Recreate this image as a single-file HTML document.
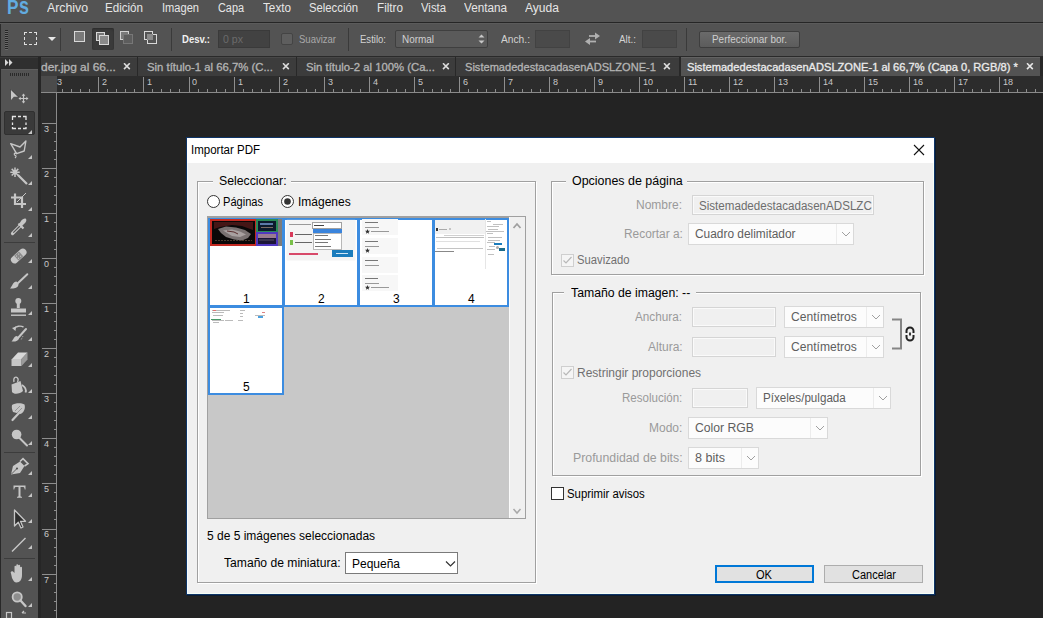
<!DOCTYPE html>
<html><head><meta charset="utf-8"><style>
html,body{margin:0;padding:0;}
body{width:1043px;height:618px;overflow:hidden;position:relative;background:#232323;font-family:"Liberation Sans",sans-serif;}
.r{position:absolute;}
.t{position:absolute;white-space:nowrap;}
</style></head><body>
<div class="r" style="left:0px;top:0px;width:1043px;height:22px;background:#535353"></div>
<div class="r" style="left:0px;top:22px;width:1043px;height:1px;background:#262626"></div>
<div class="r" style="left:0px;top:23px;width:1043px;height:1px;background:#5b5b5b"></div>
<div class="t" style="left:6.5px;top:-4.6px;font-size:21px;line-height:23px;color:#62ace0;font-weight:bold;transform:scaleX(0.8214);transform-origin:0 0;">P</div>
<div class="t" style="left:18.5px;top:-6.800000000000001px;font-size:23px;line-height:26px;color:#62ace0;font-weight:bold;transform:scaleX(0.7814);transform-origin:0 0;">s</div>
<div class="t" style="left:47px;top:1px;font-size:12px;line-height:14px;color:#e6e6e6;transform:scaleX(1.0246);transform-origin:0 0;">Archivo</div>
<div class="t" style="left:105px;top:1px;font-size:12px;line-height:14px;color:#e6e6e6;transform:scaleX(0.9655);transform-origin:0 0;">Edición</div>
<div class="t" style="left:162px;top:1px;font-size:12px;line-height:14px;color:#e6e6e6;transform:scaleX(0.9246);transform-origin:0 0;">Imagen</div>
<div class="t" style="left:218px;top:1px;font-size:12px;line-height:14px;color:#e6e6e6;transform:scaleX(0.9063);transform-origin:0 0;">Capa</div>
<div class="t" style="left:263px;top:1px;font-size:12px;line-height:14px;color:#e6e6e6;transform:scaleX(0.9766);transform-origin:0 0;">Texto</div>
<div class="t" style="left:309px;top:1px;font-size:12px;line-height:14px;color:#e6e6e6;transform:scaleX(0.9417);transform-origin:0 0;">Selección</div>
<div class="t" style="left:377px;top:1px;font-size:12px;line-height:14px;color:#e6e6e6;transform:scaleX(0.9748);transform-origin:0 0;">Filtro</div>
<div class="t" style="left:421px;top:1px;font-size:12px;line-height:14px;color:#e6e6e6;transform:scaleX(0.9451);transform-origin:0 0;">Vista</div>
<div class="t" style="left:464px;top:1px;font-size:12px;line-height:14px;color:#e6e6e6;transform:scaleX(0.9766);transform-origin:0 0;">Ventana</div>
<div class="t" style="left:525px;top:1px;font-size:12px;line-height:14px;color:#e6e6e6;transform:scaleX(1.0060);transform-origin:0 0;">Ayuda</div>
<div class="r" style="left:0px;top:24px;width:1043px;height:32px;background:#535353"></div>
<div class="r" style="left:0px;top:56px;width:1043px;height:1px;background:#2a2a2a"></div>
<div class="r" style="left:0px;top:24px;width:1px;height:32px;background:#2c2c2c"></div>
<div class="r" style="left:5px;top:30px;width:3px;height:1px;background:#262626"></div>
<div class="r" style="left:5px;top:31px;width:3px;height:1px;background:#6a6a6a"></div>
<div class="r" style="left:5px;top:32px;width:3px;height:1px;background:#262626"></div>
<div class="r" style="left:5px;top:33px;width:3px;height:1px;background:#6a6a6a"></div>
<div class="r" style="left:5px;top:34px;width:3px;height:1px;background:#262626"></div>
<div class="r" style="left:5px;top:35px;width:3px;height:1px;background:#6a6a6a"></div>
<div class="r" style="left:5px;top:36px;width:3px;height:1px;background:#262626"></div>
<div class="r" style="left:5px;top:37px;width:3px;height:1px;background:#6a6a6a"></div>
<div class="r" style="left:5px;top:38px;width:3px;height:1px;background:#262626"></div>
<div class="r" style="left:5px;top:39px;width:3px;height:1px;background:#6a6a6a"></div>
<div class="r" style="left:5px;top:40px;width:3px;height:1px;background:#262626"></div>
<div class="r" style="left:5px;top:41px;width:3px;height:1px;background:#6a6a6a"></div>
<div class="r" style="left:5px;top:42px;width:3px;height:1px;background:#262626"></div>
<div class="r" style="left:5px;top:43px;width:3px;height:1px;background:#6a6a6a"></div>
<div class="r" style="left:5px;top:44px;width:3px;height:1px;background:#262626"></div>
<div class="r" style="left:5px;top:45px;width:3px;height:1px;background:#6a6a6a"></div>
<div class="r" style="left:5px;top:46px;width:3px;height:1px;background:#262626"></div>
<div class="r" style="left:5px;top:47px;width:3px;height:1px;background:#6a6a6a"></div>
<div class="r" style="left:5px;top:48px;width:3px;height:1px;background:#262626"></div>
<div class="r" style="left:5px;top:49px;width:3px;height:1px;background:#6a6a6a"></div>
<div class="r" style="left:24px;top:32px;width:13px;height:13px;border:1px dashed #e0e0e0;box-sizing:border-box"></div>
<svg class="r" style="left:48px;top:37px" width="8" height="5"><path d="M0 0H8L4 4Z" fill="#e8e8e8"/></svg>
<div class="r" style="left:60px;top:28px;width:1px;height:23px;background:#3a3a3a"></div>
<div class="r" style="left:74px;top:31px;width:11px;height:11px;border:1px solid #d8d8d8;background:#7a7a7a;box-sizing:border-box"></div>
<div class="r" style="left:92px;top:28px;width:22px;height:22px;background:#3a3a3a;border-radius:2px;box-shadow:inset 0 1px 2px #2a2a2a"></div>
<div class="r" style="left:96px;top:32px;width:9px;height:9px;border:1px solid #d8d8d8;background:#777;box-sizing:border-box"></div>
<div class="r" style="left:99px;top:35px;width:10px;height:10px;border:1px solid #d8d8d8;background:#8a8a8a;box-sizing:border-box"></div>
<div class="r" style="left:120px;top:31px;width:9px;height:9px;border:1px solid #d0d0d0;background:#7a7a7a;box-sizing:border-box"></div>
<div class="r" style="left:123px;top:34px;width:10px;height:10px;border:1px solid #777;background:#5d5d5d;box-sizing:border-box"></div>
<div class="r" style="left:144px;top:31px;width:9px;height:9px;border:1px solid #d8d8d8;box-sizing:border-box"></div>
<div class="r" style="left:147px;top:34px;width:10px;height:10px;border:1px solid #d8d8d8;box-sizing:border-box"></div>
<div class="r" style="left:147px;top:34px;width:6px;height:6px;background:#8a8a8a"></div>
<div class="r" style="left:171px;top:28px;width:1px;height:23px;background:#3a3a3a"></div>
<div class="t" style="left:182px;top:33px;font-size:11px;line-height:12px;color:#f0f0f0;font-weight:bold;transform:scaleX(0.8691);transform-origin:0 0;">Desv.:</div>
<div class="r" style="left:218px;top:30px;width:52px;height:18px;background:#424242;border:1px solid #3a3a3a;box-sizing:border-box"></div>
<div class="t" style="left:223px;top:33px;font-size:11px;line-height:12px;color:#6b6b6b;transform:scaleX(0.9610);transform-origin:0 0;">0 px</div>
<div class="r" style="left:281px;top:33px;width:12px;height:12px;background:#5e5e5e;border:1px solid #444;border-radius:2px;box-sizing:border-box"></div>
<div class="t" style="left:299px;top:33px;font-size:11px;line-height:12px;color:#a9a9a9;transform:scaleX(0.8642);transform-origin:0 0;">Suavizar</div>
<div class="r" style="left:348px;top:28px;width:1px;height:23px;background:#3a3a3a"></div>
<div class="t" style="left:360px;top:33px;font-size:11px;line-height:12px;color:#d2d2d2;transform:scaleX(0.8676);transform-origin:0 0;">Estilo:</div>
<div class="r" style="left:395px;top:30px;width:93px;height:18px;background:#5a5a5a;border:1px solid #3f3f3f;border-radius:2px;box-sizing:border-box"></div>
<div class="t" style="left:402px;top:33px;font-size:11px;line-height:12px;color:#d0d0d0;transform:scaleX(0.9030);transform-origin:0 0;">Normal</div>
<svg class="r" style="left:478px;top:33px" width="7" height="12"><path d="M0.5 4.5L3.5 1.5L6.5 4.5Z M0.5 7.5L3.5 10.5L6.5 7.5Z" fill="#c8c8c8"/></svg>
<div class="t" style="left:501px;top:33px;font-size:11px;line-height:12px;color:#d2d2d2;transform:scaleX(0.9289);transform-origin:0 0;">Anch.:</div>
<div class="r" style="left:535px;top:30px;width:35px;height:18px;background:#4a4a4a;border:1px solid #424242;box-sizing:border-box"></div>
<svg class="r" style="left:584px;top:31px" width="17" height="15"><path d="M5 5H14" stroke="#b0b0b0" stroke-width="1.8"/><path d="M11 1.5L16 5L11 8.5Z" fill="#b0b0b0"/><path d="M12 10.5H3" stroke="#b0b0b0" stroke-width="1.8"/><path d="M6 7L1 10.5L6 14Z" fill="#b0b0b0"/></svg>
<div class="t" style="left:619px;top:33px;font-size:11px;line-height:12px;color:#d2d2d2;transform:scaleX(0.8962);transform-origin:0 0;">Alt.:</div>
<div class="r" style="left:642px;top:30px;width:35px;height:18px;background:#4a4a4a;border:1px solid #424242;box-sizing:border-box"></div>
<div class="r" style="left:686px;top:28px;width:1px;height:23px;background:#3a3a3a"></div>
<div class="r" style="left:699px;top:31px;width:101px;height:17px;background:linear-gradient(#6a6a6a,#5c5c5c);border:1px solid #3e3e3e;border-radius:2px;box-sizing:border-box"></div>
<div class="t" style="left:712px;top:33px;font-size:11px;line-height:12px;color:#cfcfcf;transform:scaleX(0.9014);transform-origin:0 0;">Perfeccionar bor.</div>
<div class="r" style="left:0px;top:57px;width:1043px;height:20px;background:#282828"></div>
<div class="r" style="left:0px;top:57px;width:38px;height:12px;background:#2f2f2f"></div>
<div class="r" style="left:0px;top:57px;width:38px;height:1px;background:#3a3a3a"></div>
<svg class="r" style="left:5px;top:59px" width="8" height="7"><path d="M0 0L3.5 3.5L0 7Z M4 0L7.5 3.5L4 7Z" fill="#d8d8d8"/></svg>
<div class="r" style="left:41px;top:57px;width:96px;height:19px;background:#3c3c3c;border-top:1px solid #474747;box-sizing:border-box"></div>
<div class="t" style="left:41px;top:61px;font-size:11px;line-height:12px;color:#b4b4b4;transform:scaleX(1.0843);transform-origin:0 0;-webkit-text-stroke:0.3px #b4b4b4;">der.jpg al 66...</div>
<div class="r" style="left:138px;top:57px;width:158px;height:19px;background:#3c3c3c;border-top:1px solid #474747;box-sizing:border-box"></div>
<div class="t" style="left:147px;top:61px;font-size:11px;line-height:12px;color:#b4b4b4;transform:scaleX(1.0296);transform-origin:0 0;-webkit-text-stroke:0.3px #b4b4b4;">Sin título-1 al 66,7% (C...</div>
<div class="r" style="left:297px;top:57px;width:158px;height:19px;background:#3c3c3c;border-top:1px solid #474747;box-sizing:border-box"></div>
<div class="t" style="left:306px;top:61px;font-size:11px;line-height:12px;color:#b4b4b4;transform:scaleX(1.0284);transform-origin:0 0;-webkit-text-stroke:0.3px #b4b4b4;">Sin título-2 al 100% (Ca...</div>
<div class="r" style="left:456px;top:57px;width:223px;height:19px;background:#3c3c3c;border-top:1px solid #474747;box-sizing:border-box"></div>
<div class="t" style="left:465px;top:61px;font-size:11px;line-height:12px;color:#b4b4b4;transform:scaleX(1.0071);transform-origin:0 0;-webkit-text-stroke:0.3px #b4b4b4;">SistemadedestacadasenADSLZONE-1</div>
<div class="r" style="left:681px;top:57px;width:359px;height:19px;background:#535353;border-top:1px solid #626262;box-sizing:border-box"></div>
<div class="t" style="left:687px;top:61px;font-size:11px;line-height:12px;color:#ebebeb;transform:scaleX(1.0093);transform-origin:0 0;-webkit-text-stroke:0.3px #ebebeb;">SistemadedestacadasenADSLZONE-1 al 66,7% (Capa 0, RGB/8) *</div>
<svg class="r" style="left:123px;top:63px" width="8" height="7"><path d="M1 0.3L6.8 6.1M6.8 0.3L1 6.1" stroke="#dcdcdc" stroke-width="1.6"/></svg>
<svg class="r" style="left:282px;top:63px" width="8" height="7"><path d="M1 0.3L6.8 6.1M6.8 0.3L1 6.1" stroke="#dcdcdc" stroke-width="1.6"/></svg>
<svg class="r" style="left:442px;top:63px" width="8" height="7"><path d="M1 0.3L6.8 6.1M6.8 0.3L1 6.1" stroke="#dcdcdc" stroke-width="1.6"/></svg>
<svg class="r" style="left:663px;top:63px" width="8" height="7"><path d="M1 0.3L6.8 6.1M6.8 0.3L1 6.1" stroke="#dcdcdc" stroke-width="1.6"/></svg>
<svg class="r" style="left:1026px;top:63px" width="8" height="7"><path d="M1 0.3L6.8 6.1M6.8 0.3L1 6.1" stroke="#e8e8e8" stroke-width="1.6"/></svg>
<div class="r" style="left:41px;top:76px;width:1002px;height:17px;background:#2c2c2c"></div>
<div class="r" style="left:41px;top:92px;width:1002px;height:1px;background:#8a8a8a"></div>
<div class="r" style="left:41px;top:76px;width:16px;height:16px;background:#4b4b4b"></div>
<div class="r" style="left:41px;top:93px;width:16px;height:525px;background:#2c2c2c"></div>
<div class="r" style="left:56px;top:93px;width:1px;height:525px;background:#8a8a8a"></div>
<svg class="r" style="left:0;top:0" width="1043" height="618"><rect x="62" y="89" width="1" height="3" fill="#8e8e8e"/><rect x="71" y="89" width="1" height="3" fill="#8e8e8e"/><rect x="80" y="89" width="1" height="3" fill="#8e8e8e"/><rect x="89" y="89" width="1" height="3" fill="#8e8e8e"/><rect x="98" y="77" width="1" height="15" fill="#8e8e8e"/><rect x="107" y="89" width="1" height="3" fill="#8e8e8e"/><rect x="116" y="89" width="1" height="3" fill="#8e8e8e"/><rect x="125" y="89" width="1" height="3" fill="#8e8e8e"/><rect x="134" y="89" width="1" height="3" fill="#8e8e8e"/><rect x="143" y="77" width="1" height="15" fill="#8e8e8e"/><rect x="152" y="89" width="1" height="3" fill="#8e8e8e"/><rect x="161" y="89" width="1" height="3" fill="#8e8e8e"/><rect x="170" y="89" width="1" height="3" fill="#8e8e8e"/><rect x="179" y="89" width="1" height="3" fill="#8e8e8e"/><rect x="189" y="77" width="1" height="15" fill="#8e8e8e"/><rect x="198" y="89" width="1" height="3" fill="#8e8e8e"/><rect x="207" y="89" width="1" height="3" fill="#8e8e8e"/><rect x="216" y="89" width="1" height="3" fill="#8e8e8e"/><rect x="225" y="89" width="1" height="3" fill="#8e8e8e"/><rect x="234" y="77" width="1" height="15" fill="#8e8e8e"/><rect x="243" y="89" width="1" height="3" fill="#8e8e8e"/><rect x="252" y="89" width="1" height="3" fill="#8e8e8e"/><rect x="261" y="89" width="1" height="3" fill="#8e8e8e"/><rect x="270" y="89" width="1" height="3" fill="#8e8e8e"/><rect x="279" y="77" width="1" height="15" fill="#8e8e8e"/><rect x="288" y="89" width="1" height="3" fill="#8e8e8e"/><rect x="297" y="89" width="1" height="3" fill="#8e8e8e"/><rect x="306" y="89" width="1" height="3" fill="#8e8e8e"/><rect x="315" y="89" width="1" height="3" fill="#8e8e8e"/><rect x="324" y="77" width="1" height="15" fill="#8e8e8e"/><rect x="333" y="89" width="1" height="3" fill="#8e8e8e"/><rect x="342" y="89" width="1" height="3" fill="#8e8e8e"/><rect x="351" y="89" width="1" height="3" fill="#8e8e8e"/><rect x="360" y="89" width="1" height="3" fill="#8e8e8e"/><rect x="369" y="77" width="1" height="15" fill="#8e8e8e"/><rect x="378" y="89" width="1" height="3" fill="#8e8e8e"/><rect x="387" y="89" width="1" height="3" fill="#8e8e8e"/><rect x="396" y="89" width="1" height="3" fill="#8e8e8e"/><rect x="405" y="89" width="1" height="3" fill="#8e8e8e"/><rect x="414" y="77" width="1" height="15" fill="#8e8e8e"/><rect x="423" y="89" width="1" height="3" fill="#8e8e8e"/><rect x="432" y="89" width="1" height="3" fill="#8e8e8e"/><rect x="441" y="89" width="1" height="3" fill="#8e8e8e"/><rect x="450" y="89" width="1" height="3" fill="#8e8e8e"/><rect x="459" y="77" width="1" height="15" fill="#8e8e8e"/><rect x="468" y="89" width="1" height="3" fill="#8e8e8e"/><rect x="477" y="89" width="1" height="3" fill="#8e8e8e"/><rect x="486" y="89" width="1" height="3" fill="#8e8e8e"/><rect x="495" y="89" width="1" height="3" fill="#8e8e8e"/><rect x="504" y="77" width="1" height="15" fill="#8e8e8e"/><rect x="513" y="89" width="1" height="3" fill="#8e8e8e"/><rect x="522" y="89" width="1" height="3" fill="#8e8e8e"/><rect x="531" y="89" width="1" height="3" fill="#8e8e8e"/><rect x="540" y="89" width="1" height="3" fill="#8e8e8e"/><rect x="549" y="77" width="1" height="15" fill="#8e8e8e"/><rect x="558" y="89" width="1" height="3" fill="#8e8e8e"/><rect x="567" y="89" width="1" height="3" fill="#8e8e8e"/><rect x="576" y="89" width="1" height="3" fill="#8e8e8e"/><rect x="585" y="89" width="1" height="3" fill="#8e8e8e"/><rect x="594" y="77" width="1" height="15" fill="#8e8e8e"/><rect x="603" y="89" width="1" height="3" fill="#8e8e8e"/><rect x="612" y="89" width="1" height="3" fill="#8e8e8e"/><rect x="621" y="89" width="1" height="3" fill="#8e8e8e"/><rect x="630" y="89" width="1" height="3" fill="#8e8e8e"/><rect x="639" y="77" width="1" height="15" fill="#8e8e8e"/><rect x="648" y="89" width="1" height="3" fill="#8e8e8e"/><rect x="657" y="89" width="1" height="3" fill="#8e8e8e"/><rect x="666" y="89" width="1" height="3" fill="#8e8e8e"/><rect x="675" y="89" width="1" height="3" fill="#8e8e8e"/><rect x="684" y="77" width="1" height="15" fill="#8e8e8e"/><rect x="693" y="89" width="1" height="3" fill="#8e8e8e"/><rect x="702" y="89" width="1" height="3" fill="#8e8e8e"/><rect x="711" y="89" width="1" height="3" fill="#8e8e8e"/><rect x="720" y="89" width="1" height="3" fill="#8e8e8e"/><rect x="729" y="77" width="1" height="15" fill="#8e8e8e"/><rect x="738" y="89" width="1" height="3" fill="#8e8e8e"/><rect x="747" y="89" width="1" height="3" fill="#8e8e8e"/><rect x="756" y="89" width="1" height="3" fill="#8e8e8e"/><rect x="765" y="89" width="1" height="3" fill="#8e8e8e"/><rect x="774" y="77" width="1" height="15" fill="#8e8e8e"/><rect x="783" y="89" width="1" height="3" fill="#8e8e8e"/><rect x="792" y="89" width="1" height="3" fill="#8e8e8e"/><rect x="801" y="89" width="1" height="3" fill="#8e8e8e"/><rect x="810" y="89" width="1" height="3" fill="#8e8e8e"/><rect x="819" y="77" width="1" height="15" fill="#8e8e8e"/><rect x="828" y="89" width="1" height="3" fill="#8e8e8e"/><rect x="837" y="89" width="1" height="3" fill="#8e8e8e"/><rect x="846" y="89" width="1" height="3" fill="#8e8e8e"/><rect x="855" y="89" width="1" height="3" fill="#8e8e8e"/><rect x="864" y="77" width="1" height="15" fill="#8e8e8e"/><rect x="873" y="89" width="1" height="3" fill="#8e8e8e"/><rect x="882" y="89" width="1" height="3" fill="#8e8e8e"/><rect x="891" y="89" width="1" height="3" fill="#8e8e8e"/><rect x="900" y="89" width="1" height="3" fill="#8e8e8e"/><rect x="909" y="77" width="1" height="15" fill="#8e8e8e"/><rect x="918" y="89" width="1" height="3" fill="#8e8e8e"/><rect x="927" y="89" width="1" height="3" fill="#8e8e8e"/><rect x="936" y="89" width="1" height="3" fill="#8e8e8e"/><rect x="945" y="89" width="1" height="3" fill="#8e8e8e"/><rect x="954" y="77" width="1" height="15" fill="#8e8e8e"/><rect x="963" y="89" width="1" height="3" fill="#8e8e8e"/><rect x="972" y="89" width="1" height="3" fill="#8e8e8e"/><rect x="981" y="89" width="1" height="3" fill="#8e8e8e"/><rect x="990" y="89" width="1" height="3" fill="#8e8e8e"/><rect x="999" y="77" width="1" height="15" fill="#8e8e8e"/><rect x="1008" y="89" width="1" height="3" fill="#8e8e8e"/><rect x="1017" y="89" width="1" height="3" fill="#8e8e8e"/><rect x="1026" y="89" width="1" height="3" fill="#8e8e8e"/><rect x="1035" y="89" width="1" height="3" fill="#8e8e8e"/><rect x="42" y="123" width="15" height="1" fill="#8e8e8e"/><rect x="54" y="132" width="3" height="1" fill="#8e8e8e"/><rect x="54" y="141" width="3" height="1" fill="#8e8e8e"/><rect x="54" y="150" width="3" height="1" fill="#8e8e8e"/><rect x="54" y="159" width="3" height="1" fill="#8e8e8e"/><rect x="42" y="168" width="15" height="1" fill="#8e8e8e"/><rect x="54" y="177" width="3" height="1" fill="#8e8e8e"/><rect x="54" y="186" width="3" height="1" fill="#8e8e8e"/><rect x="54" y="195" width="3" height="1" fill="#8e8e8e"/><rect x="54" y="204" width="3" height="1" fill="#8e8e8e"/><rect x="42" y="213" width="15" height="1" fill="#8e8e8e"/><rect x="54" y="222" width="3" height="1" fill="#8e8e8e"/><rect x="54" y="231" width="3" height="1" fill="#8e8e8e"/><rect x="54" y="240" width="3" height="1" fill="#8e8e8e"/><rect x="54" y="249" width="3" height="1" fill="#8e8e8e"/><rect x="42" y="258" width="15" height="1" fill="#8e8e8e"/><rect x="54" y="267" width="3" height="1" fill="#8e8e8e"/><rect x="54" y="276" width="3" height="1" fill="#8e8e8e"/><rect x="54" y="285" width="3" height="1" fill="#8e8e8e"/><rect x="54" y="294" width="3" height="1" fill="#8e8e8e"/><rect x="42" y="303" width="15" height="1" fill="#8e8e8e"/><rect x="54" y="312" width="3" height="1" fill="#8e8e8e"/><rect x="54" y="321" width="3" height="1" fill="#8e8e8e"/><rect x="54" y="330" width="3" height="1" fill="#8e8e8e"/><rect x="54" y="339" width="3" height="1" fill="#8e8e8e"/><rect x="42" y="348" width="15" height="1" fill="#8e8e8e"/><rect x="54" y="357" width="3" height="1" fill="#8e8e8e"/><rect x="54" y="366" width="3" height="1" fill="#8e8e8e"/><rect x="54" y="375" width="3" height="1" fill="#8e8e8e"/><rect x="54" y="384" width="3" height="1" fill="#8e8e8e"/><rect x="42" y="393" width="15" height="1" fill="#8e8e8e"/><rect x="54" y="402" width="3" height="1" fill="#8e8e8e"/><rect x="54" y="411" width="3" height="1" fill="#8e8e8e"/><rect x="54" y="420" width="3" height="1" fill="#8e8e8e"/><rect x="54" y="429" width="3" height="1" fill="#8e8e8e"/><rect x="42" y="438" width="15" height="1" fill="#8e8e8e"/><rect x="54" y="447" width="3" height="1" fill="#8e8e8e"/><rect x="54" y="456" width="3" height="1" fill="#8e8e8e"/><rect x="54" y="465" width="3" height="1" fill="#8e8e8e"/><rect x="54" y="474" width="3" height="1" fill="#8e8e8e"/><rect x="42" y="483" width="15" height="1" fill="#8e8e8e"/><rect x="54" y="492" width="3" height="1" fill="#8e8e8e"/><rect x="54" y="501" width="3" height="1" fill="#8e8e8e"/><rect x="54" y="510" width="3" height="1" fill="#8e8e8e"/><rect x="54" y="519" width="3" height="1" fill="#8e8e8e"/><rect x="42" y="529" width="15" height="1" fill="#8e8e8e"/><rect x="54" y="538" width="3" height="1" fill="#8e8e8e"/><rect x="54" y="547" width="3" height="1" fill="#8e8e8e"/><rect x="54" y="556" width="3" height="1" fill="#8e8e8e"/><rect x="54" y="565" width="3" height="1" fill="#8e8e8e"/><rect x="42" y="574" width="15" height="1" fill="#8e8e8e"/><rect x="54" y="583" width="3" height="1" fill="#8e8e8e"/><rect x="54" y="592" width="3" height="1" fill="#8e8e8e"/><rect x="54" y="601" width="3" height="1" fill="#8e8e8e"/><rect x="54" y="610" width="3" height="1" fill="#8e8e8e"/></svg>
<div class="t" style="left:57px;top:77px;font-size:9px;line-height:10px;color:#c8c8c8;">3</div>
<div class="t" style="left:102px;top:77px;font-size:9px;line-height:10px;color:#c8c8c8;">2</div>
<div class="t" style="left:147px;top:77px;font-size:9px;line-height:10px;color:#c8c8c8;">1</div>
<div class="t" style="left:192px;top:77px;font-size:9px;line-height:10px;color:#c8c8c8;">0</div>
<div class="t" style="left:238px;top:77px;font-size:9px;line-height:10px;color:#c8c8c8;">1</div>
<div class="t" style="left:283px;top:77px;font-size:9px;line-height:10px;color:#c8c8c8;">2</div>
<div class="t" style="left:328px;top:77px;font-size:9px;line-height:10px;color:#c8c8c8;">3</div>
<div class="t" style="left:373px;top:77px;font-size:9px;line-height:10px;color:#c8c8c8;">4</div>
<div class="t" style="left:418px;top:77px;font-size:9px;line-height:10px;color:#c8c8c8;">5</div>
<div class="t" style="left:463px;top:77px;font-size:9px;line-height:10px;color:#c8c8c8;">6</div>
<div class="t" style="left:508px;top:77px;font-size:9px;line-height:10px;color:#c8c8c8;">7</div>
<div class="t" style="left:553px;top:77px;font-size:9px;line-height:10px;color:#c8c8c8;">8</div>
<div class="t" style="left:598px;top:77px;font-size:9px;line-height:10px;color:#c8c8c8;">9</div>
<div class="t" style="left:643px;top:77px;font-size:9px;line-height:10px;color:#c8c8c8;">10</div>
<div class="t" style="left:688px;top:77px;font-size:9px;line-height:10px;color:#c8c8c8;">11</div>
<div class="t" style="left:733px;top:77px;font-size:9px;line-height:10px;color:#c8c8c8;">12</div>
<div class="t" style="left:778px;top:77px;font-size:9px;line-height:10px;color:#c8c8c8;">13</div>
<div class="t" style="left:823px;top:77px;font-size:9px;line-height:10px;color:#c8c8c8;">14</div>
<div class="t" style="left:868px;top:77px;font-size:9px;line-height:10px;color:#c8c8c8;">15</div>
<div class="t" style="left:913px;top:77px;font-size:9px;line-height:10px;color:#c8c8c8;">16</div>
<div class="t" style="left:958px;top:77px;font-size:9px;line-height:10px;color:#c8c8c8;">17</div>
<div class="t" style="left:1003px;top:77px;font-size:9px;line-height:10px;color:#c8c8c8;">18</div>
<div class="t" style="left:44px;top:124px;font-size:9px;line-height:10px;color:#c8c8c8;">3</div>
<div class="t" style="left:44px;top:169px;font-size:9px;line-height:10px;color:#c8c8c8;">2</div>
<div class="t" style="left:44px;top:214px;font-size:9px;line-height:10px;color:#c8c8c8;">1</div>
<div class="t" style="left:44px;top:259px;font-size:9px;line-height:10px;color:#c8c8c8;">0</div>
<div class="t" style="left:44px;top:304px;font-size:9px;line-height:10px;color:#c8c8c8;">1</div>
<div class="t" style="left:44px;top:349px;font-size:9px;line-height:10px;color:#c8c8c8;">2</div>
<div class="t" style="left:44px;top:394px;font-size:9px;line-height:10px;color:#c8c8c8;">3</div>
<div class="t" style="left:44px;top:439px;font-size:9px;line-height:10px;color:#c8c8c8;">4</div>
<div class="t" style="left:44px;top:484px;font-size:9px;line-height:10px;color:#c8c8c8;">5</div>
<div class="t" style="left:44px;top:529px;font-size:9px;line-height:10px;color:#c8c8c8;">6</div>
<div class="t" style="left:44px;top:575px;font-size:9px;line-height:10px;color:#c8c8c8;">7</div>
<div class="t" style="left:44px;top:620px;font-size:9px;line-height:10px;color:#c8c8c8;">8</div>
<div class="r" style="left:0px;top:69px;width:41px;height:549px;background:#282828"></div>
<div class="r" style="left:1px;top:69px;width:37px;height:549px;background:#535353"></div>
<div class="r" style="left:38px;top:57px;width:3px;height:561px;background:#262626"></div>
<div class="r" style="left:1px;top:69px;width:37px;height:1px;background:#5e5e5e"></div>
<div class="r" style="left:10px;top:73px;width:1px;height:3px;background:#2a2a2a"></div>
<div class="r" style="left:12px;top:73px;width:1px;height:3px;background:#2a2a2a"></div>
<div class="r" style="left:14px;top:73px;width:1px;height:3px;background:#2a2a2a"></div>
<div class="r" style="left:16px;top:73px;width:1px;height:3px;background:#2a2a2a"></div>
<div class="r" style="left:18px;top:73px;width:1px;height:3px;background:#2a2a2a"></div>
<div class="r" style="left:20px;top:73px;width:1px;height:3px;background:#2a2a2a"></div>
<div class="r" style="left:22px;top:73px;width:1px;height:3px;background:#2a2a2a"></div>
<div class="r" style="left:24px;top:73px;width:1px;height:3px;background:#2a2a2a"></div>
<div class="r" style="left:26px;top:73px;width:1px;height:3px;background:#2a2a2a"></div>
<div class="r" style="left:28px;top:73px;width:1px;height:3px;background:#2a2a2a"></div>
<div class="r" style="left:4px;top:111px;width:31px;height:24px;background:#3a3a3a;border:1px solid #303030;box-sizing:border-box;border-radius:2px"></div>
<svg class="r" style="left:0;top:0" width="41" height="618"><path d="M11 89.5L18.3 96.8H13.8L11 100Z" fill="#c6c6c6"/><path d="M11 89.5L18.3 96.8" stroke="#2a2a2a" stroke-width="0.8"/><path d="M23.5 94.5V102.5M19.5 98.5H27.5" stroke="#c6c6c6" stroke-width="1.2"/><path d="M23.5 93.5L21.7 95.7H25.3Z M23.5 103.5L21.7 101.3H25.3Z M18.5 98.5L20.7 96.7V100.3Z M28.5 98.5L26.3 96.7V100.3Z" fill="#c6c6c6"/><path d="M12.5 120V116.5H16M18 116.5H21M23 116.5H26V120M26 122.5V125M26 127V128.5H23M21 128.5H18M16 128.5H12.5V127M12.5 125V122.5" fill="none" stroke="#e6e6e6" stroke-width="1.3"/><path d="M32 130V134H28Z" fill="#c6c6c6"/><path d="M10.7 143.6L20 147L25.9 141L24.2 151L16.6 153.7Z" fill="none" stroke="#c6c6c6" stroke-width="1.4" stroke-linejoin="round"/><path d="M16.6 153.7C14 152 13.5 155 15.5 155.5C16.5 156 16 157 15 158" stroke="#c6c6c6" stroke-width="1.2" fill="none"/><path d="M32 155V159H28Z" fill="#c6c6c6"/><path d="M15 167.5V177M10.3 172.2H19.7M11.7 168.9L18.3 175.5M18.3 168.9L11.7 175.5" stroke="#c6c6c6" stroke-width="1.5"/><circle cx="15" cy="172.2" r="2.2" fill="#c6c6c6"/><path d="M18 175L27 184" stroke="#c6c6c6" stroke-width="2.2"/><path d="M32 181V185H28Z" fill="#c6c6c6"/><path d="M15 193.5V204H26M11 197.5H22V208" stroke="#c6c6c6" stroke-width="2.2" fill="none"/><path d="M17 202L26 193" stroke="#c6c6c6" stroke-width="1"/><path d="M32 207V211H28Z" fill="#c6c6c6"/><path d="M12.5 233.5L20.5 225.5" stroke="#c6c6c6" stroke-width="3.2" stroke-linecap="round"/><path d="M13.3 232.7L20 226" stroke="#535353" stroke-width="1.2"/><path d="M18.5 223.5L23.5 228.5" stroke="#c6c6c6" stroke-width="2.2"/><path d="M21 221C22.5 219 25 218 26 219C27 220 26 222.5 24 224L22 226L19.5 223.5Z" fill="#c6c6c6"/><path d="M32 233V237H28Z" fill="#c6c6c6"/><rect x="4" y="242" width="31" height="1" fill="#3c3c3c"/><g transform="rotate(-42 18.7 256)"><rect x="9.5" y="252.3" width="18.4" height="7.4" rx="3.7" fill="#c6c6c6"/><rect x="15.5" y="252.8" width="6.4" height="6.4" fill="#8a8a8a"/><circle cx="17" cy="254.5" r="0.6" fill="#c6c6c6"/><circle cx="20" cy="254.5" r="0.6" fill="#c6c6c6"/><circle cx="17" cy="257.5" r="0.6" fill="#c6c6c6"/><circle cx="20" cy="257.5" r="0.6" fill="#c6c6c6"/></g><path d="M32 259V263H28Z" fill="#c6c6c6"/><path d="M17 284L27.3 274.3" stroke="#c6c6c6" stroke-width="2" stroke-linecap="round"/><path d="M16.5 281.5C13 281.5 12.5 286 10 288.5C14 289 18.5 288 18.5 284Z" fill="#c6c6c6"/><path d="M32 285V289H28Z" fill="#c6c6c6"/><circle cx="18.3" cy="301" r="3" fill="#c6c6c6"/><rect x="16.8" y="302" width="3" height="6" fill="#c6c6c6"/><path d="M11 308.5H26V312.5H11Z" fill="#c6c6c6"/><rect x="11" y="314.5" width="15" height="1.4" fill="#c6c6c6"/><path d="M32 311V315H28Z" fill="#c6c6c6"/><path d="M17.5 338.5L26 329" stroke="#c6c6c6" stroke-width="2" stroke-linecap="round"/><path d="M17 336C14 336 13.5 339.5 11.5 341.5C15 342 18.5 341 19 338Z" fill="#c6c6c6"/><path d="M23.5 327C20.5 325.5 16 326 14 329" stroke="#c6c6c6" stroke-width="1.4" fill="none"/><path d="M12 328L16 326.5L15.5 331Z" fill="#c6c6c6"/><path d="M23 336L21 340" stroke="#c6c6c6" stroke-width="0.8" stroke-dasharray="1 1"/><path d="M32 337V341H28Z" fill="#c6c6c6"/><path d="M12 359L18 352.5H27.5L21.5 359Z" fill="#d8d8d8"/><path d="M11.5 359H21.5V366H11.5Z" fill="#c6c6c6"/><path d="M21.5 359L27.5 352.5V359.5L21.5 366Z" fill="#9a9a9a"/><path d="M32 363V367H28Z" fill="#c6c6c6"/><path d="M14 382C13 377 16 376.5 17.5 378C18.5 379 18 381 17.5 382" stroke="#c6c6c6" stroke-width="1.3" fill="none"/><path d="M11.5 384.5L20.5 381L23 391C20 394 14 395 12 392Z" fill="#c6c6c6"/><path d="M22 385C25 387 26.5 390 25.5 392.5" stroke="#c6c6c6" stroke-width="1.8" fill="none"/><path d="M32 389V393H28Z" fill="#c6c6c6"/><path d="M12 405C15 403 21 402.5 24.5 404.5C25.5 408 24.5 412 20.5 414L13 412C12 410 11.5 407 12 405Z" fill="#c6c6c6"/><path d="M19 413L12.5 420" stroke="#c6c6c6" stroke-width="2.2" stroke-linecap="round"/><path d="M15 411L20 406M17 413L22 408" stroke="#8a8a8a" stroke-width="0.8"/><path d="M32 415V419H28Z" fill="#c6c6c6"/><circle cx="16.6" cy="434.5" r="4.8" fill="#c6c6c6"/><path d="M19.5 438L27 445.5" stroke="#c6c6c6" stroke-width="2" stroke-linecap="round"/><path d="M32 441V445H28Z" fill="#c6c6c6"/><rect x="4" y="452" width="31" height="1" fill="#3c3c3c"/><path d="M11 474.5L13 466L20 461.5L24.5 466L20 473Z" fill="#c6c6c6"/><path d="M20 461.5L23 458.7L28 463.7L24.5 466" stroke="#c6c6c6" stroke-width="1.6" fill="none"/><path d="M11.5 474L16.5 469" stroke="#535353" stroke-width="0.9"/><circle cx="17" cy="468.5" r="1.1" fill="#535353"/><path d="M32 471V475H28Z" fill="#c6c6c6"/><path d="M13.5 485.5H25.5V489.5H24.7C24.5 487.5 24 487 22.5 487H20.5V496C20.5 496.6 20.8 496.8 22 496.8V497.8H17V496.8C18.2 496.8 18.5 496.6 18.5 496V487H16.5C15 487 14.5 487.5 14.3 489.5H13.5Z" fill="#c6c6c6"/><path d="M32 493V497H28Z" fill="#c6c6c6"/><path d="M14.5 510V526L18.3 522.3L21 528L23 527L20.5 521.3H25.5Z" fill="#2e2e2e" stroke="#c6c6c6" stroke-width="1.3" stroke-linejoin="round"/><path d="M32 519V523H28Z" fill="#c6c6c6"/><path d="M12 551.5L25.5 538" stroke="#c6c6c6" stroke-width="1.5"/><path d="M32 545V549H28Z" fill="#c6c6c6"/><rect x="4" y="558" width="31" height="1" fill="#3c3c3c"/><path d="M11 573.5C10 572 11.5 570.5 13 571.5L14.5 573V566.5C14.5 565.5 16.3 565.5 16.3 566.5V571.5V565C16.3 564 18.2 564 18.2 565V571.5V565.5C18.2 564.5 20.1 564.5 20.1 565.5V571.5V567.5C20.1 566.5 22 566.5 22 567.5V575C22 579.5 20 582.5 16.5 582.5C14.5 582.5 13.5 581 12 578Z" fill="#c6c6c6"/><path d="M32 577V581H28Z" fill="#c6c6c6"/><circle cx="17.2" cy="597" r="4.6" fill="#8e8e8e" stroke="#c6c6c6" stroke-width="1.8"/><path d="M20.5 600.5L25.5 606" stroke="#c6c6c6" stroke-width="2.4" stroke-linecap="round"/><path d="M32 603V607H28Z" fill="#c6c6c6"/><rect x="6.5" y="612.5" width="5" height="6" fill="none" stroke="#c6c6c6" stroke-width="1.2"/><path d="M22 613L26 613M22 613L24 611" stroke="#c6c6c6" stroke-width="1.2"/></svg>
<div class="r" style="left:186px;top:137px;width:749px;height:458px;background:#f0f0f0;border:1px solid #0e3466;box-sizing:border-box;box-shadow:1px 1px 0 #0c1c30, inset 1px 1px 0 #f2fbff, inset -1px -1px 0 #f6fff6"></div>
<div class="r" style="left:187px;top:138px;width:747px;height:25px;background:#ffffff"></div>
<div class="t" style="left:191px;top:143px;font-size:12px;line-height:14px;color:#000;transform:scaleX(0.9583);transform-origin:0 0;">Importar PDF</div>
<svg class="r" style="left:913px;top:144px" width="12" height="12"><path d="M1 1L11 11M11 1L1 11" stroke="#111" stroke-width="1.1"/></svg>
<div class="r" style="left:197px;top:181px;width:339px;height:402px;border:1px solid #a0a0a0;box-sizing:border-box;box-shadow:1px 1px 0 #fff, inset 1px 1px 0 #fff"></div>
<div class="r" style="left:213px;top:180px;width:78px;height:3px;background:#f0f0f0"></div>
<div class="t" style="left:219px;top:174px;font-size:12px;line-height:14px;color:#000;transform:scaleX(1.0238);transform-origin:0 0;">Seleccionar:</div>
<svg class="r" style="left:207px;top:195px" width="13" height="13"><circle cx="6.5" cy="6.5" r="6" fill="#fff" stroke="#333" stroke-width="1"/></svg>
<div class="t" style="left:223px;top:195px;font-size:12px;line-height:14px;color:#000;transform:scaleX(0.9225);transform-origin:0 0;">Páginas</div>
<svg class="r" style="left:281px;top:195px" width="13" height="13"><circle cx="6.5" cy="6.5" r="6" fill="#fff" stroke="#333" stroke-width="1"/><circle cx="6.5" cy="6.5" r="3.3" fill="#333"/></svg>
<div class="t" style="left:298px;top:195px;font-size:12px;line-height:14px;color:#000;">Imágenes</div>
<div class="r" style="left:207px;top:216px;width:319px;height:303px;background:#c8c8c8;border:1px solid #a0a0a0;border-top:2px solid #a0a0a0;box-sizing:border-box"></div>
<div class="r" style="left:509px;top:217px;width:16px;height:301px;background:#f0f0f0"></div>
<div class="r" style="left:509px;top:217px;width:1px;height:301px;background:#fbfbfb"></div>
<svg class="r" style="left:512px;top:221px" width="10" height="9"><path d="M1.5 7L5 3L8.5 7" stroke="#a0a0a0" stroke-width="1.8" fill="none"/></svg>
<svg class="r" style="left:512px;top:507px" width="10" height="8"><path d="M1.5 2L5 6L8.5 2" stroke="#a8a8a8" stroke-width="1.5" fill="none"/></svg>
<div class="r" style="left:208px;top:218px;width:76px;height:89px;background:#fff;border:2px solid #3c8ce0;box-sizing:border-box"></div>
<div class="t" style="left:243px;top:292px;font-size:12px;line-height:14px;color:#000;">1</div>
<div class="r" style="left:283px;top:218px;width:76px;height:89px;background:#fff;border:2px solid #3c8ce0;box-sizing:border-box"></div>
<div class="t" style="left:318px;top:292px;font-size:12px;line-height:14px;color:#000;">2</div>
<div class="r" style="left:358px;top:218px;width:76px;height:89px;background:#fff;border:2px solid #3c8ce0;box-sizing:border-box"></div>
<div class="t" style="left:393px;top:292px;font-size:12px;line-height:14px;color:#000;">3</div>
<div class="r" style="left:433px;top:218px;width:76px;height:89px;background:#fff;border:2px solid #3c8ce0;box-sizing:border-box"></div>
<div class="t" style="left:468px;top:292px;font-size:12px;line-height:14px;color:#000;">4</div>
<div class="r" style="left:208px;top:306px;width:76px;height:89px;background:#fff;border:2px solid #3c8ce0;box-sizing:border-box"></div>
<div class="t" style="left:243px;top:380px;font-size:12px;line-height:14px;color:#000;">5</div>
<div class="r" style="left:210px;top:219px;width:72px;height:27px;background:#7c7c7c"></div>
<div class="r" style="left:210px;top:219px;width:47px;height:27px;background:#0a0808;border:2px solid #c42a22;box-sizing:border-box"></div>
<svg class="r" style="left:212px;top:221px" width="43" height="23"><path d="M2 1H41V9L30 5L20 4L8 6L2 8Z" fill="#4a1818" opacity="0.9"/><path d="M6 8L14 5.5L24 6.5L33 9L39 13L36 17L30 19.5L22 18.5L14 16L9 12Z" fill="#7a7272"/><path d="M11 9.5L20 8.5L28 10.5L34 13.5L28 16L20 15Z" fill="#a8a0a0"/><path d="M15 10L22 11L26 13" stroke="#5a3030" stroke-width="1" fill="none"/><path d="M3 19.5H40" stroke="#5a4a3a" stroke-width="0.8" stroke-dasharray="2 1"/></svg>
<div class="r" style="left:256px;top:219px;width:22px;height:14px;background:#0c1a2c;border:2px solid #2a8a58;box-sizing:border-box"></div>
<div class="r" style="left:260px;top:223px;width:13px;height:2px;background:#5a7aa8"></div>
<div class="r" style="left:261px;top:227px;width:12px;height:1px;background:#7a6a60"></div>
<div class="r" style="left:256px;top:232px;width:22px;height:14px;background:#1c1638;border:2px solid #5038c0;box-sizing:border-box"></div>
<div class="r" style="left:258px;top:234px;width:18px;height:4px;background:#9a7a90"></div>
<div class="r" style="left:259px;top:239px;width:15px;height:2px;background:#3a3450"></div>
<div class="r" style="left:287px;top:220px;width:68px;height:40px;background:#f4f4f4;box-shadow:0 0 1px #ddd"></div>
<div class="r" style="left:289px;top:224px;width:22px;height:1px;background:#999"></div>
<div class="r" style="left:312px;top:222px;width:30px;height:7px;background:#fff;border:1px solid #a0a0a0;box-sizing:border-box"></div>
<div class="r" style="left:314px;top:225px;width:10px;height:1px;background:#444"></div>
<div class="r" style="left:313px;top:229px;width:29px;height:4px;background:#3a84dc"></div>
<div class="r" style="left:313px;top:233px;width:29px;height:17px;background:#fff;border:1px solid #b8b8b8;box-sizing:border-box"></div>
<div class="r" style="left:315px;top:235.0px;width:13px;height:1px;background:#777"></div>
<div class="r" style="left:315px;top:238.6px;width:16px;height:1px;background:#777"></div>
<div class="r" style="left:315px;top:242.2px;width:13px;height:1px;background:#777"></div>
<div class="r" style="left:315px;top:245.8px;width:16px;height:1px;background:#777"></div>
<div class="r" style="left:290px;top:232px;width:3px;height:5px;background:#d83a5a"></div>
<div class="r" style="left:295px;top:234px;width:17px;height:1px;background:#666"></div>
<div class="r" style="left:290px;top:240px;width:3px;height:5px;background:#7ac04a"></div>
<div class="r" style="left:295px;top:242px;width:17px;height:1px;background:#666"></div>
<div class="r" style="left:289px;top:253px;width:29px;height:1.5px;background:#d84a6a"></div>
<div class="r" style="left:332px;top:250px;width:21px;height:7px;background:#1b7cbc"></div>
<div class="r" style="left:336px;top:253px;width:12px;height:1px;background:#cfe6f6"></div>
<div class="r" style="left:362px;top:219px;width:36px;height:16px;background:#f7f7f7"></div>
<div class="r" style="left:365px;top:222px;width:13px;height:1px;background:#777"></div>
<div class="r" style="left:365px;top:226.5px;width:14px;height:1px;background:#999"></div>
<svg class="r" style="left:365px;top:229px" width="5" height="5"><path d="M2.5 0L3.2 1.8H5L3.6 2.9L4.1 4.8L2.5 3.7L0.9 4.8L1.4 2.9L0 1.8H1.8Z" fill="#333"/></svg>
<div class="r" style="left:371px;top:231px;width:18px;height:1px;background:#999"></div>
<div class="r" style="left:362px;top:238px;width:36px;height:16px;background:#f7f7f7"></div>
<div class="r" style="left:365px;top:241px;width:13px;height:1px;background:#777"></div>
<div class="r" style="left:365px;top:245.5px;width:14px;height:1px;background:#999"></div>
<svg class="r" style="left:365px;top:248px" width="5" height="5"><path d="M2.5 0L3.2 1.8H5L3.6 2.9L4.1 4.8L2.5 3.7L0.9 4.8L1.4 2.9L0 1.8H1.8Z" fill="#333"/></svg>
<div class="r" style="left:362px;top:257px;width:36px;height:16px;background:#f7f7f7"></div>
<div class="r" style="left:365px;top:260px;width:13px;height:1px;background:#777"></div>
<div class="r" style="left:365px;top:264.5px;width:14px;height:1px;background:#999"></div>
<div class="r" style="left:362px;top:275px;width:36px;height:16px;background:#f7f7f7"></div>
<div class="r" style="left:365px;top:278px;width:13px;height:1px;background:#777"></div>
<div class="r" style="left:365px;top:282.5px;width:14px;height:1px;background:#999"></div>
<svg class="r" style="left:365px;top:285px" width="5" height="5"><path d="M2.5 0L3.2 1.8H5L3.6 2.9L4.1 4.8L2.5 3.7L0.9 4.8L1.4 2.9L0 1.8H1.8Z" fill="#333"/></svg>
<div class="r" style="left:371px;top:287px;width:18px;height:1px;background:#999"></div>
<div class="r" style="left:435px;top:220px;width:51px;height:14px;background:#f1f1f1"></div>
<div class="r" style="left:436px;top:228px;width:2px;height:3px;background:#333"></div>
<div class="r" style="left:439px;top:229px;width:8px;height:1px;background:#aaa"></div>
<div class="r" style="left:449px;top:228px;width:2px;height:2px;background:#c4c4c4"></div>
<div class="r" style="left:444px;top:235px;width:40px;height:1px;background:#d0d0d0"></div>
<div class="r" style="left:436px;top:237px;width:48px;height:1px;background:#c0c0c0"></div>
<div class="r" style="left:436px;top:241px;width:44px;height:1px;background:#e0e0e0"></div>
<div class="r" style="left:437px;top:248px;width:46px;height:1px;background:#c4c4c4"></div>
<div class="r" style="left:435px;top:251px;width:19px;height:1px;background:#888"></div>
<div class="r" style="left:485px;top:219px;width:1px;height:50px;background:#e6e6e6"></div>
<div class="r" style="left:487px;top:221px;width:4px;height:1px;background:#c0c0c0"></div>
<div class="r" style="left:493px;top:224px;width:10px;height:1px;background:#c0c0c0"></div>
<div class="r" style="left:487px;top:226px;width:12px;height:1px;background:#c0c0c0"></div>
<div class="r" style="left:488px;top:228.5px;width:10px;height:1px;background:#c0c0c0"></div>
<div class="r" style="left:486px;top:231px;width:18px;height:1px;background:#c0c0c0"></div>
<div class="r" style="left:487px;top:233px;width:6px;height:1px;background:#c0c0c0"></div>
<div class="r" style="left:488px;top:237px;width:14px;height:1px;background:#c0c0c0"></div>
<div class="r" style="left:488px;top:239.5px;width:12px;height:1px;background:#c0c0c0"></div>
<div class="r" style="left:487px;top:242px;width:8px;height:1px;background:#c0c0c0"></div>
<div class="r" style="left:489px;top:246px;width:6px;height:1px;background:#c0c0c0"></div>
<div class="r" style="left:487px;top:249px;width:8px;height:1px;background:#c0c0c0"></div>
<div class="r" style="left:488px;top:254px;width:6px;height:1px;background:#c0c0c0"></div>
<div class="r" style="left:494px;top:243px;width:8px;height:1.5px;background:#1b7cbc"></div>
<div class="r" style="left:496px;top:246px;width:3px;height:3px;background:#aaa;border-radius:50%"></div>
<div class="r" style="left:499px;top:248px;width:6px;height:3px;background:#1b6c8c"></div>
<div class="r" style="left:212px;top:309.5px;width:18px;height:1px;background:#bbb"></div>
<div class="r" style="left:212px;top:312px;width:12px;height:1px;background:#bbb"></div>
<div class="r" style="left:213px;top:315px;width:10px;height:1px;background:#bbb"></div>
<div class="r" style="left:212px;top:319.5px;width:12px;height:1px;background:#bbb"></div>
<div class="r" style="left:213px;top:322px;width:6px;height:1px;background:#bbb"></div>
<div class="r" style="left:240px;top:309.5px;width:5px;height:1px;background:#bbb"></div>
<div class="r" style="left:240px;top:313px;width:3px;height:1px;background:#bbb"></div>
<div class="r" style="left:240px;top:316px;width:3px;height:1px;background:#bbb"></div>
<div class="r" style="left:225px;top:319.5px;width:8px;height:1px;background:#bbb"></div>
<div class="r" style="left:238px;top:319.5px;width:5px;height:1px;background:#bbb"></div>
<div class="r" style="left:255px;top:315px;width:10px;height:1px;background:#bbb"></div>
<div class="r" style="left:211px;top:319px;width:10px;height:1px;background:#4a9a6a"></div>
<div class="r" style="left:258px;top:316px;width:5px;height:2px;background:#4aa0e0"></div>
<div class="r" style="left:213px;top:310px;width:3px;height:1px;background:#e07070"></div>
<div class="r" style="left:262px;top:312px;width:3px;height:1px;background:#e08080"></div>
<div class="t" style="left:207px;top:529px;font-size:12px;line-height:14px;color:#000;">5 de 5 imágenes seleccionadas</div>
<div class="t" style="left:224px;top:556px;font-size:12px;line-height:14px;color:#000;transform:scaleX(1.0098);transform-origin:0 0;">Tamaño de miniatura:</div>
<div class="r" style="left:345px;top:552px;width:113px;height:22px;background:#fff;border:1px solid #7a7a7a;box-sizing:border-box"></div>
<div class="t" style="left:352px;top:557px;font-size:12px;line-height:14px;color:#000;">Pequeña</div>
<svg class="r" style="left:445px;top:560px" width="11" height="8"><path d="M1 1.5L5.5 6L10 1.5" stroke="#333" stroke-width="1.2" fill="none"/></svg>
<div class="r" style="left:551px;top:181px;width:373px;height:94px;border:1px solid #a0a0a0;box-sizing:border-box;box-shadow:1px 1px 0 #fff, inset 1px 1px 0 #fff"></div>
<div class="r" style="left:566px;top:180px;width:121px;height:3px;background:#f0f0f0"></div>
<div class="t" style="left:572px;top:174px;font-size:12px;line-height:14px;color:#000;transform:scaleX(1.0373);transform-origin:0 0;">Opciones de página</div>
<div class="t" style="left:636px;top:198px;font-size:12px;line-height:14px;color:#9a9a9a;">Nombre:</div>
<div class="r" style="left:692px;top:195px;width:182px;height:20px;background:#f0f0f0;border:1px solid #d5d5d5;box-sizing:border-box;box-shadow:inset 0 0 0 1px #fafafa"></div>
<div class="t" style="left:699px;top:199px;font-size:12px;line-height:14px;color:#6d6d6d;transform:scaleX(0.9668);transform-origin:0 0;">SistemadedestacadasenADSLZC</div>
<div class="t" style="left:624px;top:227px;font-size:12px;line-height:14px;color:#9a9a9a;transform:scaleX(0.9908);transform-origin:0 0;">Recortar a:</div>
<div class="r" style="left:688px;top:223px;width:166px;height:22px;background:#fcfcfc;border:1px solid #d9d9d9;box-sizing:border-box"></div>
<div class="r" style="left:836px;top:224px;width:1px;height:20px;background:#ececec"></div>
<div class="t" style="left:695px;top:227px;font-size:12px;line-height:14px;color:#5e5e5e;transform:scaleX(0.9912);transform-origin:0 0;">Cuadro delimitador</div>
<svg class="r" style="left:841px;top:231px" width="10" height="6"><path d="M1 1L5 5L9 1" stroke="#a0a0a0" stroke-width="1" fill="none"/></svg>
<svg class="r" style="left:561px;top:254px" width="13" height="13"><rect x="0.5" y="0.5" width="12" height="12" fill="#f5f5f5" stroke="#cfcfcf"/><path d="M2.5 6.5L5 9L10.5 3" stroke="#b8b8b8" stroke-width="1.2" fill="none"/></svg>
<div class="t" style="left:577px;top:253px;font-size:12px;line-height:14px;color:#707070;transform:scaleX(0.9370);transform-origin:0 0;">Suavizado</div>
<div class="r" style="left:552px;top:292px;width:369px;height:184px;border:1px solid #a0a0a0;box-sizing:border-box;box-shadow:1px 1px 0 #fff, inset 1px 1px 0 #fff"></div>
<div class="r" style="left:564px;top:291px;width:132px;height:3px;background:#f0f0f0"></div>
<div class="t" style="left:571px;top:286px;font-size:12px;line-height:14px;color:#000;transform:scaleX(1.0214);transform-origin:0 0;">Tamaño de imagen: --</div>
<div class="t" style="left:635px;top:310px;font-size:12px;line-height:14px;color:#9a9a9a;transform:scaleX(0.9788);transform-origin:0 0;">Anchura:</div>
<div class="r" style="left:692px;top:307px;width:84px;height:20px;background:#f0f0f0;border:1px solid #d5d5d5;box-sizing:border-box;box-shadow:inset 0 0 0 1px #fafafa"></div>
<div class="r" style="left:784px;top:306px;width:100px;height:22px;background:#fcfcfc;border:1px solid #d9d9d9;box-sizing:border-box"></div>
<div class="r" style="left:866px;top:307px;width:1px;height:20px;background:#ececec"></div>
<div class="t" style="left:791px;top:310px;font-size:12px;line-height:14px;color:#5e5e5e;transform:scaleX(1.0070);transform-origin:0 0;">Centímetros</div>
<svg class="r" style="left:871px;top:314px" width="10" height="6"><path d="M1 1L5 5L9 1" stroke="#a0a0a0" stroke-width="1" fill="none"/></svg>
<div class="t" style="left:648px;top:340px;font-size:12px;line-height:14px;color:#9a9a9a;">Altura:</div>
<div class="r" style="left:692px;top:337px;width:84px;height:20px;background:#f0f0f0;border:1px solid #d5d5d5;box-sizing:border-box;box-shadow:inset 0 0 0 1px #fafafa"></div>
<div class="r" style="left:784px;top:336px;width:100px;height:22px;background:#fcfcfc;border:1px solid #d9d9d9;box-sizing:border-box"></div>
<div class="r" style="left:866px;top:337px;width:1px;height:20px;background:#ececec"></div>
<div class="t" style="left:791px;top:340px;font-size:12px;line-height:14px;color:#5e5e5e;transform:scaleX(1.0070);transform-origin:0 0;">Centímetros</div>
<svg class="r" style="left:871px;top:344px" width="10" height="6"><path d="M1 1L5 5L9 1" stroke="#a0a0a0" stroke-width="1" fill="none"/></svg>
<svg class="r" style="left:892px;top:318px" width="12" height="33"><path d="M0 1.5H9V30.5H0" stroke="#858585" stroke-width="2" fill="none"/></svg>
<svg class="r" style="left:904px;top:326px" width="13" height="17"><path d="M2.5 7V5A3.5 3.5 0 0 1 9.5 5V7M2.5 9V11A3.5 3.5 0 0 0 9.5 11V9" stroke="#222" stroke-width="2" fill="none"/><path d="M6 6.5V9.5" stroke="#222" stroke-width="1.8"/></svg>
<svg class="r" style="left:561px;top:366px" width="13" height="13"><rect x="0.5" y="0.5" width="12" height="12" fill="#f5f5f5" stroke="#cfcfcf"/><path d="M2.5 6.5L5 9L10.5 3" stroke="#b8b8b8" stroke-width="1.2" fill="none"/></svg>
<div class="t" style="left:577px;top:366px;font-size:12px;line-height:14px;color:#707070;">Restringir proporciones</div>
<div class="t" style="left:622px;top:391px;font-size:12px;line-height:14px;color:#9a9a9a;transform:scaleX(0.9617);transform-origin:0 0;">Resolución:</div>
<div class="r" style="left:692px;top:388px;width:56px;height:20px;background:#f0f0f0;border:1px solid #d5d5d5;box-sizing:border-box;box-shadow:inset 0 0 0 1px #fafafa"></div>
<div class="r" style="left:756px;top:387px;width:135px;height:22px;background:#fcfcfc;border:1px solid #d9d9d9;box-sizing:border-box"></div>
<div class="r" style="left:873px;top:388px;width:1px;height:20px;background:#ececec"></div>
<div class="t" style="left:763px;top:391px;font-size:12px;line-height:14px;color:#5e5e5e;transform:scaleX(0.9698);transform-origin:0 0;">Píxeles/pulgada</div>
<svg class="r" style="left:878px;top:395px" width="10" height="6"><path d="M1 1L5 5L9 1" stroke="#a0a0a0" stroke-width="1" fill="none"/></svg>
<div class="t" style="left:649px;top:421px;font-size:12px;line-height:14px;color:#9a9a9a;">Modo:</div>
<div class="r" style="left:688px;top:417px;width:140px;height:22px;background:#fcfcfc;border:1px solid #d9d9d9;box-sizing:border-box"></div>
<div class="r" style="left:810px;top:418px;width:1px;height:20px;background:#ececec"></div>
<div class="t" style="left:695px;top:421px;font-size:12px;line-height:14px;color:#5e5e5e;transform:scaleX(1.0170);transform-origin:0 0;">Color RGB</div>
<svg class="r" style="left:815px;top:425px" width="10" height="6"><path d="M1 1L5 5L9 1" stroke="#a0a0a0" stroke-width="1" fill="none"/></svg>
<div class="t" style="left:573px;top:451px;font-size:12px;line-height:14px;color:#9a9a9a;transform:scaleX(1.0271);transform-origin:0 0;">Profundidad de bits:</div>
<div class="r" style="left:688px;top:447px;width:71px;height:22px;background:#fcfcfc;border:1px solid #d9d9d9;box-sizing:border-box"></div>
<div class="r" style="left:741px;top:448px;width:1px;height:20px;background:#ececec"></div>
<div class="t" style="left:695px;top:451px;font-size:12px;line-height:14px;color:#5e5e5e;transform:scaleX(1.0463);transform-origin:0 0;">8 bits</div>
<svg class="r" style="left:746px;top:455px" width="10" height="6"><path d="M1 1L5 5L9 1" stroke="#a0a0a0" stroke-width="1" fill="none"/></svg>
<div class="r" style="left:551px;top:487px;width:13px;height:13px;background:#fff;border:1px solid #333;box-sizing:border-box"></div>
<div class="t" style="left:567px;top:487px;font-size:12px;line-height:14px;color:#000;transform:scaleX(0.9472);transform-origin:0 0;">Suprimir avisos</div>
<div class="r" style="left:715px;top:565px;width:99px;height:18px;background:#e1e1e1;border:2px solid #0078d7;box-sizing:border-box"></div>
<div class="t" style="left:756px;top:568px;font-size:12px;line-height:14px;color:#000;transform:scaleX(0.9234);transform-origin:0 0;">OK</div>
<div class="r" style="left:824px;top:565px;width:99px;height:18px;background:#e1e1e1;border:1px solid #adadad;box-sizing:border-box"></div>
<div class="t" style="left:852px;top:568px;font-size:12px;line-height:14px;color:#000;transform:scaleX(0.9161);transform-origin:0 0;">Cancelar</div>
</body></html>
